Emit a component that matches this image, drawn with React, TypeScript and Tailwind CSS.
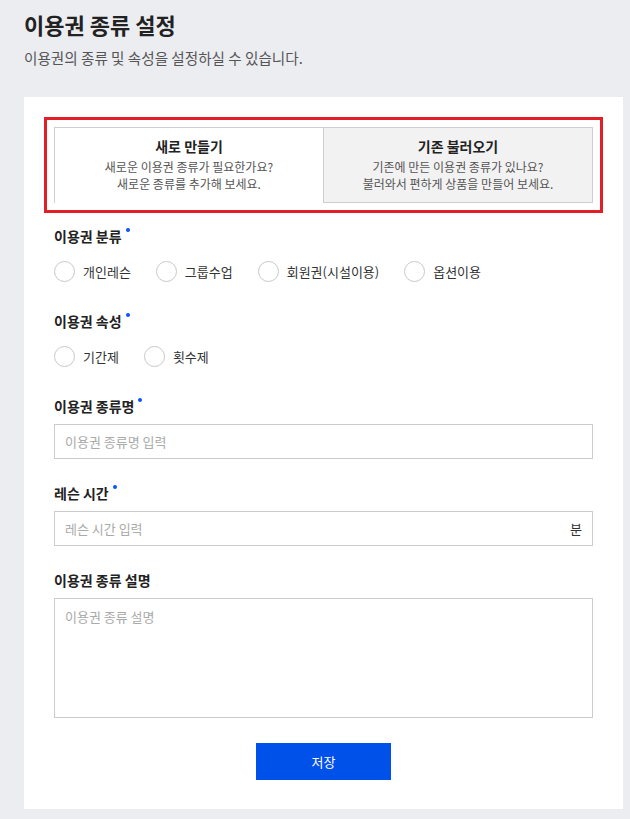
import { useState } from 'react';

const font = { fontFamily: '"Noto Sans CJK KR", "Noto Sans", sans-serif' };

function Label({ text, required }: { text: string; required?: boolean }) {
  return (
    <div className="flex items-start text-[14px] font-bold text-[#222] leading-[20px]">
      <span>{text}</span>
      {required && <span className="ml-[4px] mt-[2px] w-[4px] h-[4px] rounded-full bg-[#0a52ff]" />}
    </div>
  );
}

function Radio({ label, checked, onClick }: { label: string; checked: boolean; onClick: () => void }) {
  return (
    <button onClick={onClick} className="flex items-center gap-[8px] mr-[25px]">
      <span className="w-[21px] h-[21px] rounded-full border border-[#c8c8c8] bg-white flex items-center justify-center">
        {checked && <span className="w-[9px] h-[9px] rounded-full bg-[#0050e8]" />}
      </span>
      <span className="text-[13px] text-[#333]">{label}</span>
    </button>
  );
}

export default function App() {
  const [kind, setKind] = useState<string | null>(null);
  const [attr, setAttr] = useState<string | null>(null);

  return (
    <div style={font} className="min-h-[819px] bg-[#ecedf1] px-[24px] pt-[8px] pb-[11px]">
      <h1 className="text-[22px] font-bold text-[#222] leading-[32px]">이용권 종류 설정</h1>
      <p className="mt-[8px] text-[14.6px] text-[#555] leading-[20px]">이용권의 종류 및 속성을 설정하실 수 있습니다.</p>

      <div className="mt-[29px] bg-white w-[599px] px-[20px] pt-[20px] pb-[29px]">
        {/* 탭 */}
        <div className="border-[3px] border-[#e41e26] p-[7px]">
          <div className="flex h-[76px]">
            <div className="flex-1 border-t border-l border-[#cfcfcf] flex flex-col items-center pt-[8px]">
              <div className="text-[14px] font-bold text-[#222] leading-[20px]">새로 만들기</div>
              <div className="mt-[2px] text-[12px] text-[#555] leading-[17px] text-center">
                새로운 이용권 종류가 필요한가요?<br />새로운 종류를 추가해 보세요.
              </div>
            </div>
            <div className="flex-1 border border-[#cfcfcf] bg-[#f2f2f2] flex flex-col items-center pt-[8px]">
              <div className="text-[14px] font-bold text-[#222] leading-[20px]">기존 불러오기</div>
              <div className="mt-[2px] text-[12px] text-[#555] leading-[17px] text-center">
                기존에 만든 이용권 종류가 있나요?<br />불러와서 편하게 상품을 만들어 보세요.
              </div>
            </div>
          </div>
        </div>

        <div className="px-[10px]">
          <div className="mt-[13px]">
            <Label text="이용권 분류" required />
            <div className="flex mt-[15px]">
              {['개인레슨', '그룹수업', '회원권(시설이용)', '옵션이용'].map((v) => (
                <Radio key={v} label={v} checked={kind === v} onClick={() => setKind(v)} />
              ))}
            </div>
          </div>

          <div className="mt-[29px]">
            <Label text="이용권 속성" required />
            <div className="flex mt-[15px]">
              {['기간제', '횟수제'].map((v) => (
                <Radio key={v} label={v} checked={attr === v} onClick={() => setAttr(v)} />
              ))}
            </div>
          </div>

          <div className="mt-[29px]">
            <Label text="이용권 종류명" required />
            <input
              placeholder="이용권 종류명 입력"
              className="mt-[8px] w-full h-[35px] border border-[#cccccc] px-[10px] text-[13px] text-[#333] placeholder:text-[#aaa] outline-none"
            />
          </div>

          <div className="mt-[24px]">
            <Label text="레슨 시간" required />
            <div className="mt-[8px] flex items-center h-[35px] border border-[#cccccc] px-[10px]">
              <input
                placeholder="레슨 시간 입력"
                className="flex-1 text-[13px] text-[#333] placeholder:text-[#aaa] outline-none"
              />
              <span className="text-[13px] text-[#333]">분</span>
            </div>
          </div>

          <div className="mt-[24px]">
            <Label text="이용권 종류 설명" />
            <textarea
              placeholder="이용권 종류 설명"
              className="block mt-[8px] w-full h-[120px] border border-[#cccccc] px-[10px] py-[8px] text-[13px] text-[#333] placeholder:text-[#aaa] outline-none resize-none"
            />
          </div>

          <div className="flex justify-center mt-[25px]">
            <button className="w-[135px] h-[37px] bg-[#0050ea] text-white text-[13px]">저장</button>
          </div>
        </div>
      </div>
    </div>
  );
}
